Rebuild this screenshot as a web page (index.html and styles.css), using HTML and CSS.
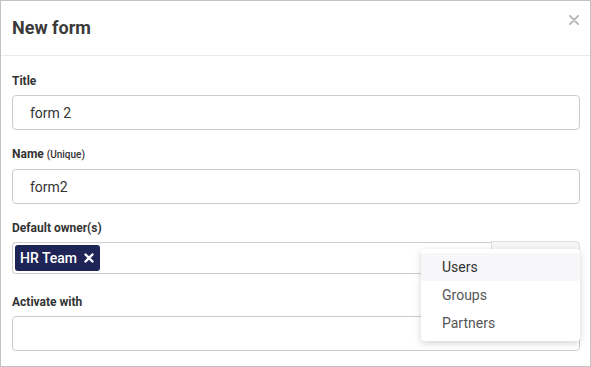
FILE: index.html
```html
<!DOCTYPE html>
<html lang="en">
<head>
    <meta charset="UTF-8">
    <meta name="viewport" content="width=device-width, initial-scale=1.0">
    <title>New form</title>
    <link rel="stylesheet" href="styles.css">
</head>
<body>
    <div class="modal">
        <header class="modal-header">
            <h1>New form</h1>
            <a href="#" class="close" aria-label="Close">
                <svg width="10" height="10" viewBox="0 0 10 10"><path d="M1 1L9 9M9 1L1 9" stroke="#b8b8b8" stroke-width="1.8" stroke-linecap="round"/></svg>
            </a>
        </header>

        <form class="modal-body">
            <div class="form-group">
                <label for="title">Title</label>
                <input type="text" id="title" value="form 2">
            </div>
            <div class="form-group">
                <label for="name">Name <small>(Unique)</small></label>
                <input type="text" id="name" value="form2">
            </div>
            <div class="form-group owners">
                <label>Default owner(s)</label>
                <div class="owner-field">
                    <div class="tags">
                        <span class="tag">HR Team
                            <svg width="10" height="10" viewBox="0 0 10 10"><path d="M1.5 1.5L8.5 8.5M8.5 1.5L1.5 8.5" stroke="#fff" stroke-width="2.4" stroke-linecap="round"/></svg>
                        </span>
                    </div>
                    <button type="button" class="owner-btn"></button>
                    <ul class="dropdown">
                        <li class="active">Users</li>
                        <li>Groups</li>
                        <li>Partners</li>
                    </ul>
                </div>
            </div>
            <div class="form-group">
                <label for="activate">Activate with</label>
                <input type="text" id="activate">
            </div>
        </form>
    </div>
</body>
</html>
```

FILE: styles.css
```css
* {
    box-sizing: border-box;
}
body {
    margin: 0;
    font-family: Roboto, "Liberation Sans", sans-serif;
    color: #333;
    background: #fff;
}
.modal {
    width: 591px;
    height: 367px;
    border: 1px solid #c2c2c2;
    overflow: hidden;
}
.modal-header {
    height: 55px;
    display: flex;
    align-items: center;
    justify-content: space-between;
    padding: 0 12px 2px 11px;
    border-bottom: 1px solid #e9e9e9;
}
.modal-header h1 {
    margin: 0;
    font-size: 18px;
    font-weight: 700;
    color: #3a3a3a;
}
.close {
    display: flex;
    margin-top: -14px;
    margin-right: -1px;
}
.modal-body {
    padding: 17px 10px 0 11px;
}
.form-group {
    margin-bottom: 16px;
}
.form-group.owners {
    margin-bottom: 20px;
}
label {
    display: block;
    font-size: 12px;
    font-weight: 700;
    line-height: 16px;
    color: #333;
    margin-bottom: 6px;
}
label small {
    font-size: 10px;
    font-weight: 500;
}
input {
    display: block;
    width: 100%;
    height: 35px;
    padding: 0 17px;
    border: 1px solid #cdcdcd;
    border-radius: 4px;
    font-family: inherit;
    font-size: 14px;
    color: #333;
    outline: none;
}
.owner-field {
    position: relative;
    display: flex;
    height: 32px;
}
.tags {
    flex: 1;
    display: flex;
    align-items: center;
    padding: 0 2px;
    border: 1px solid #cdcdcd;
    border-right: none;
    border-radius: 4px 0 0 4px;
}
.tag {
    display: inline-flex;
    align-items: center;
    gap: 7px;
    height: 26px;
    padding: 0 6px 0 5px;
    background: #1f2457;
    color: #fff;
    border-radius: 3px;
    font-size: 14px;
    font-weight: 500;
}
.owner-btn {
    width: 89px;
    height: 33px;
    margin-top: -1px;
    border: 1px solid #dedede;
    border-radius: 0 4px 4px 0;
    background: #f6f6f7;
}
.dropdown {
    position: absolute;
    top: 7px;
    right: 0;
    width: 159px;
    margin: 0;
    padding: 4px 0;
    list-style: none;
    background: #fff;
    border-radius: 3px;
    box-shadow: 0 2px 7px rgba(0, 0, 0, 0.18);
    z-index: 2;
}
.dropdown li {
    height: 28px;
    line-height: 28px;
    padding-left: 21px;
    font-size: 14px;
    color: #555;
}
.dropdown li.active {
    background: #f7f7fa;
    color: #333;
}
```
